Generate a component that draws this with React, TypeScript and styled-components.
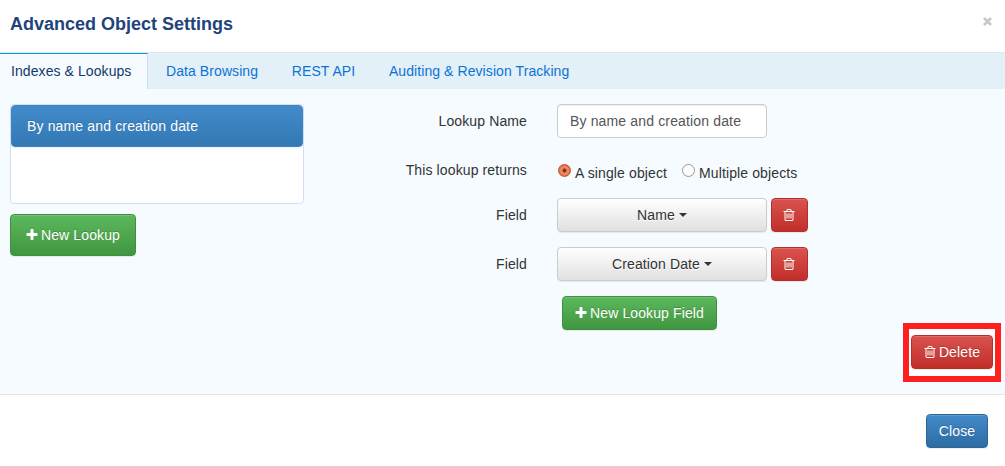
import React from 'react';
import styled, { createGlobalStyle, css } from 'styled-components';

const GlobalStyle = createGlobalStyle`
  * { box-sizing: border-box; }
  body {
    margin: 0;
    background: #fff;
    color: #333;
    font: 14px/20px "Liberation Sans", Arial, sans-serif;
    letter-spacing: 0.12px;
  }
  button, input { font: inherit; letter-spacing: inherit; }
`;

const Dialog = styled.div`
  display: flex;
  flex-direction: column;
  width: 1005px;
  height: 466px;
  overflow: hidden;
  background: #fff;
`;

const Header = styled.header`
  display: flex;
  justify-content: space-between;
  height: 53px;
  padding: 12px 13px 0 10px;
  border-bottom: 1px solid #e5e5e5;
`;

const Title = styled.h4`
  margin: 0;
  font-size: 18px;
  line-height: 24px;
  font-weight: bold;
  letter-spacing: 0;
  color: #1f437c;
`;

const Dismiss = styled.button`
  display: flex;
  height: 9px;
  margin: 5px 0 0;
  padding: 0;
  border: 0;
  background: none;
  color: #c8c8c8;
`;

const Tabs = styled.nav`
  display: flex;
  height: 36px;
  background: #e4f0f8;
`;

const Tab = styled.a<{ $active?: boolean }>`
  height: 36px;
  padding: 8px 15.7px 0 18px;
  color: #0a73d6;
  white-space: nowrap;
  letter-spacing: 0.08px;
  ${(p) =>
    p.$active &&
    css`
      width: 148px;
      padding: 7px 0 0 11px;
      color: #14386b;
      background: #f5fbff;
      border-top: 1px solid #0a95dd;
      border-right: 1px solid #cbdcf2;
    `}
`;

const Body = styled.main`
  display: flex;
  height: 305px;
  padding: 15px 4px 0 10px;
  background: #f5fbff;
`;

const Sidebar = styled.aside`
  width: 294px;
`;

const List = styled.div`
  height: 100px;
  margin-bottom: 10px;
  border: 1px solid #d3dff5;
  border-radius: 4px;
  background: #fff;
`;

const ListItem = styled.div`
  height: 42px;
  padding: 10px 15px;
  border: 1px solid #3e83c3;
  border-radius: 4px;
  background: linear-gradient(#428bca, #3278b3);
  color: #fff;
  letter-spacing: 0.15px;
  text-shadow: 0 -1px 0 #3071a9;
  box-shadow: 0 1px 2px rgba(0, 0, 0, 0.08);
`;

const tones = {
  green: css`
    background: linear-gradient(#5cb85c, #419641);
    border-color: #3e8f3e;
  `,
  red: css`
    background: linear-gradient(#d9534f, #c12e2a);
    border-color: #b92c28;
  `,
  blue: css`
    background: linear-gradient(#428bca, #2d6ca2);
    border-color: #2b669a;
  `,
  plain: css`
    background: linear-gradient(#fff, #e0e0e0);
    border-color: #ccc;
    color: #333;
    text-shadow: 0 1px 0 #fff;
  `,
};

const Button = styled.button<{ $tone: keyof typeof tones; $width: number; $tall?: boolean }>`
  display: flex;
  align-items: center;
  justify-content: center;
  flex: none;
  gap: 2px;
  width: ${(p) => p.$width}px;
  height: ${(p) => (p.$tall ? 42 : 34)}px;
  padding: 0;
  border: 1px solid;
  border-radius: 4px;
  color: #fff;
  white-space: nowrap;
  text-shadow: 0 -1px 0 rgba(0, 0, 0, 0.2);
  box-shadow: inset 0 1px 0 rgba(255, 255, 255, 0.15), 0 1px 1px rgba(0, 0, 0, 0.075);
  ${(p) => tones[p.$tone]}
`;

const Caret = styled.span`
  margin-left: 2px;
  border-top: 4px solid #333;
  border-left: 4px solid transparent;
  border-right: 4px solid transparent;
`;

const Form = styled.section`
  display: flex;
  flex-direction: column;
  flex: 1;
`;

const Row = styled.div<{ $height: number }>`
  display: flex;
  gap: 4px;
  height: ${(p) => p.$height}px;
`;

const Label = styled.label`
  width: 223px;
  margin-right: 26px;
  padding-top: 7px;
  text-align: right;
`;

const TextInput = styled.input`
  width: 210px;
  height: 34px;
  padding: 6px 12px;
  border: 1px solid #ccc;
  border-radius: 4px;
  background: #fff;
  color: #555;
  letter-spacing: 0.15px;
  box-shadow: inset 0 1px 1px rgba(0, 0, 0, 0.075);
`;

const Choice = styled.label<{ $width: number }>`
  display: flex;
  width: ${(p) => p.$width}px;
  padding: 10px 0 0 1px;
  gap: 4px;
  white-space: nowrap;
`;

const Radio = styled.span<{ $on?: boolean }>`
  flex: none;
  width: 13px;
  height: 13px;
  margin: 1px 0 0;
  border: 1px solid ${(p) => (p.$on ? '#a8583c' : '#999')};
  border-radius: 50%;
  background: ${(p) =>
    p.$on
      ? 'radial-gradient(circle, #70382a 0 1.7px, #f28a5f 2.4px 3.5px, #ee7246 5px)'
      : 'linear-gradient(#fff, #fafafa)'};
`;

const AddRow = styled.div`
  padding-left: 258px;
`;

const Highlight = styled.div`
  align-self: flex-end;
  width: 98px;
  height: 59px;
  margin-top: -7px;
  padding: 6px 2px;
  border: 6px solid #ff1f1f;
  background: #fff;
`;

const Footer = styled.footer`
  display: flex;
  justify-content: flex-end;
  height: 72px;
  padding: 19px 17px 0 0;
  border-top: 1px solid #e5e5e5;
`;

const glyphs = {
  plus: 'M1600 736v192q0 40-28 68t-68 28h-416v416q0 40-28 68t-68 28h-192q-40 0-68-28t-28-68v-416h-416q-40 0-68-28t-28-68v-192q0-40 28-68t68-28h416v-416q0-40 28-68t68-28h192q40 0 68 28t28 68v416h416q40 0 68 28t28 68z',
  trash:
    'M704 736v576q0 14-9 23t-23 9h-64q-14 0-23-9t-9-23v-576q0-14 9-23t23-9h64q14 0 23 9t9 23zm256 0v576q0 14-9 23t-23 9h-64q-14 0-23-9t-9-23v-576q0-14 9-23t23-9h64q14 0 23 9t9 23zm256 0v576q0 14-9 23t-23 9h-64q-14 0-23-9t-9-23v-576q0-14 9-23t23-9h64q14 0 23 9t9 23zm128 724v-948h-896v948q0 22 7 40.5t14.5 27 10.5 8.5h832q3 0 10.5-8.5t14.5-27 7-40.5zm-672-1076h448l-48-117q-7-9-17-11h-317q-10 2-17 11zm928 32v64q0 14-9 23t-23 9h-96v948q0 83-47 143.5t-113 60.5h-832q-66 0-113-58.5t-47-141.5v-952h-96q-14 0-23-9t-9-23v-64q0-14 9-23t23-9h309l70-167q15-37 54-63t79-26h320q40 0 79 26t54 63l70 167h309q14 0 23 9t9 23z',
};

const Glyph = styled.svg`
  flex: none;
  width: 13px;
  height: 14px;
  fill: currentColor;
`;

const PlusIcon = () => (
  <Glyph viewBox="128 0 1664 1792">
    <path d={glyphs.plus} />
  </Glyph>
);

const TrashIcon = () => (
  <Glyph viewBox="128 0 1664 1792">
    <path d={glyphs.trash} />
  </Glyph>
);

const CrossIcon = () => (
  <svg width="9" height="9" viewBox="0 0 9 9" stroke="currentColor" strokeWidth="2.8">
    <path d="M1 1 8 8M8 1 1 8" />
  </svg>
);

const fields = ['Name', 'Creation Date'];

export default function App() {
  return (
    <>
      <GlobalStyle />
      <Dialog>
        <Header>
          <Title>Advanced Object Settings</Title>
          <Dismiss aria-label="Dismiss">
            <CrossIcon />
          </Dismiss>
        </Header>
        <Tabs>
          <Tab $active>Indexes &amp; Lookups</Tab>
          <Tab>Data Browsing</Tab>
          <Tab>REST API</Tab>
          <Tab>Auditing &amp; Revision Tracking</Tab>
        </Tabs>
        <Body>
          <Sidebar>
            <List>
              <ListItem>By name and creation date</ListItem>
            </List>
            <Button $tone="green" $width={126} $tall>
              <PlusIcon />
              New Lookup
            </Button>
          </Sidebar>
          <Form>
            <Row $height={49}>
              <Label>Lookup Name</Label>
              <TextInput defaultValue="By name and creation date" />
            </Row>
            <Row $height={45}>
              <Label>This lookup returns</Label>
              <Choice $width={120}>
                <Radio $on />
                A single object
              </Choice>
              <Choice $width={130}>
                <Radio />
                Multiple objects
              </Choice>
            </Row>
            {fields.map((name) => (
              <Row $height={49} key={name}>
                <Label>Field</Label>
                <Button $tone="plain" $width={210}>
                  {name}
                  <Caret />
                </Button>
                <Button $tone="red" $width={37} aria-label="Remove field">
                  <TrashIcon />
                </Button>
              </Row>
            ))}
            <AddRow>
              <Button $tone="green" $width={155}>
                <PlusIcon />
                New Lookup Field
              </Button>
            </AddRow>
            <Highlight>
              <Button $tone="red" $width={82}>
                <TrashIcon />
                Delete
              </Button>
            </Highlight>
          </Form>
        </Body>
        <Footer>
          <Button $tone="blue" $width={62}>
            Close
          </Button>
        </Footer>
      </Dialog>
    </>
  );
}
